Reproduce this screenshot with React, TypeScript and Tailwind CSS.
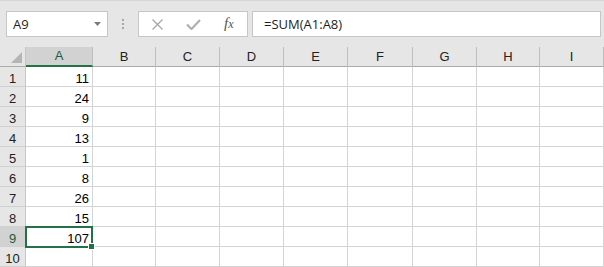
import React from 'react';

const cols = [
  { name: 'A', w: 'w-[67px]' },
  { name: 'B', w: 'w-[63px]' },
  { name: 'C', w: 'w-[64px]' },
  { name: 'D', w: 'w-[64px]' },
  { name: 'E', w: 'w-[64px]' },
  { name: 'F', w: 'w-[65px]' },
  { name: 'G', w: 'w-[64px]' },
  { name: 'H', w: 'w-[63px]' },
  { name: 'I', w: 'w-[64px]' },
];

const values: (number | null)[] = [11, 24, 9, 13, 1, 8, 26, 15, 107, null];

const FormulaBar: React.FC = () => (
  <div className="flex h-[47px] border-t border-[#d6d6d6] pt-[10px] font-['Open_Sans']">
    <div className="ml-[6px] w-[102px] h-[26px] border border-[#c6c6c6] bg-white flex items-center justify-between pl-[6px] pr-[6px]">
      <span className="text-[13px] text-[#1e1e1e] leading-none">A9</span>
      <svg width="7" height="4" viewBox="0 0 7 4">
        <polygon points="0,0 7,0 3.5,4" fill="#7a7a7a" />
      </svg>
    </div>
    <div className="ml-[14px] pt-[8px] flex flex-col gap-[2px]">
      <div className="w-[2px] h-[2px] bg-[#a6a6a6]" />
      <div className="w-[2px] h-[2px] bg-[#a6a6a6]" />
      <div className="w-[2px] h-[2px] bg-[#a6a6a6]" />
    </div>
    <div className="ml-[14px] w-[110px] h-[26px] border border-[#c6c6c6] bg-white flex items-center">
      <svg className="ml-[13px]" width="11" height="11" viewBox="0 0 11 11">
        <path d="M0.5 0.5 L10.5 10.5 M10.5 0.5 L0.5 10.5" stroke="#a8a8a8" strokeWidth="1.4" />
      </svg>
      <svg className="ml-[23px]" width="15" height="11" viewBox="0 0 15 11">
        <path d="M1 5.5 L5.5 10 L14 1" stroke="#b0b0b0" strokeWidth="2.2" fill="none" />
      </svg>
      <span className="ml-[23px] mt-[-2px] font-['Liberation_Serif'] italic text-[15px] text-[#555] leading-none">
        f<span className="text-[12px]">x</span>
      </span>
    </div>
    <div className="ml-[4px] w-[349px] h-[26px] border border-[#c6c6c6] bg-white flex items-center pl-[11px]">
      <span className="text-[13px] text-[#1e1e1e] leading-none">=SUM(A1:A8)</span>
    </div>
  </div>
);

const HeaderRow: React.FC = () => (
  <div className="flex h-[20px]">
    <div className="w-[26px] border-r border-b border-r-[#c6c6c6] border-b-[#ababab] flex items-end justify-end pr-[3px] pb-[3px]">
      <svg width="11" height="11" viewBox="0 0 11 11">
        <polygon points="11,0 11,11 0,11" fill="#b5b5b5" />
      </svg>
    </div>
    {cols.map(c =>
      c.name === 'A' ? (
        <div
          key={c.name}
          className={`${c.w} bg-[#d2d2d2] border-r border-r-[#bdbdbd] border-b-2 border-b-[#217346] flex items-center justify-center text-[13px] text-[#1d5c38] leading-[18px]`}
        >
          {c.name}
        </div>
      ) : (
        <div
          key={c.name}
          className={`${c.w} border-r border-r-[#bdbdbd] border-b border-b-[#ababab] flex items-center justify-center text-[13px] text-[#222] leading-[19px]`}
        >
          {c.name}
        </div>
      )
    )}
  </div>
);

export default function App() {
  return (
    <div className="w-[604px] h-[267px] bg-[#e6e6e6] overflow-hidden font-['Liberation_Sans',sans-serif]">
      <FormulaBar />
      <HeaderRow />
      {values.map((v, i) => {
        const row = i + 1;
        const selected = row === 9;
        return (
          <div key={row} className="flex h-[20px]">
            <div
              className={`w-[26px] border-r border-b border-r-[#c6c6c6] border-b-[#d0d0d0] flex items-end justify-center text-[13px] leading-[15px] ${
                selected ? 'bg-[#d2d2d2] text-[#1d5c38]' : 'text-[#222]'
              }`}
            >
              {row}
            </div>
            {cols.map(c => (
              <div
                key={c.name}
                className={`${c.w} relative bg-white border-r border-b border-[#d4d4d4] flex items-end justify-end pr-[3px] text-[13px] leading-[15px] text-black`}
              >
                {c.name === 'A' && v !== null ? v : ''}
                {c.name === 'A' && selected && (
                  <div className="absolute z-10 left-[-1px] top-[-1px] w-[68px] h-[22px] border-2 border-[#217346]">
                    <div className="absolute left-[61px] top-[15px] w-[7px] h-[7px] bg-[#217346] border border-white" />
                  </div>
                )}
              </div>
            ))}
          </div>
        );
      })}
    </div>
  );
}
